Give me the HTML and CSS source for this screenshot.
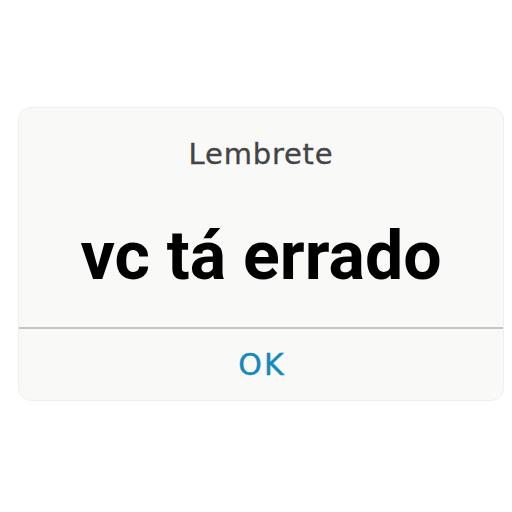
FILE: index.html
```html
<!doctype html>
<html lang="pt">
	<head>
		<meta charset="utf-8">
		<link rel="stylesheet" href="styles.css">
		<title>Lembrete</title>
	</head>
	<body>
		<div class="page">
			<div class="alert">
				<div class="alert-body">
					<div class="alert-title">Lembrete</div>
					<div class="alert-message">vc tá errado</div>
				</div>
				<div class="alert-footer">
					<span class="alert-button">OK</span>
				</div>
			</div>
		</div>
	</body>
</html>
```

FILE: styles.css
```css
body {
	background: #fff;
	margin: 0;
}

.page {
	padding: 107px 9px 0 18px;
}

.alert {
	background: #f9f9f8;
	border: 1px solid #efefee;
	border-radius: 13px;
	box-sizing: border-box;
	height: 294px;
	width: 486px;
	display: flex;
	flex-direction: column;
}

.alert-body {
	border-bottom: 2px solid #c6c6c6;
	height: 221px;
	box-sizing: border-box;
	padding-top: 28px;
	text-align: center;
}

.alert-title {
	color: #444;
	font: 400 29px/36px 'DejaVu Sans', sans-serif;
	letter-spacing: 0.8px;
	-webkit-text-stroke: 0.3px #444;
}

.alert-message {
	color: #000;
	font: 700 68px/78px Roboto, sans-serif;
	margin-top: 45px;
}

.alert-footer {
	flex: 1;
	display: flex;
	align-items: center;
	justify-content: center;
}

.alert-button {
	color: #1589bb;
	font: 400 30px/36px 'DejaVu Sans', sans-serif;
	letter-spacing: 2px;
	margin-left: 2px;
	-webkit-text-stroke: 0.4px #1589bb;
}
```
